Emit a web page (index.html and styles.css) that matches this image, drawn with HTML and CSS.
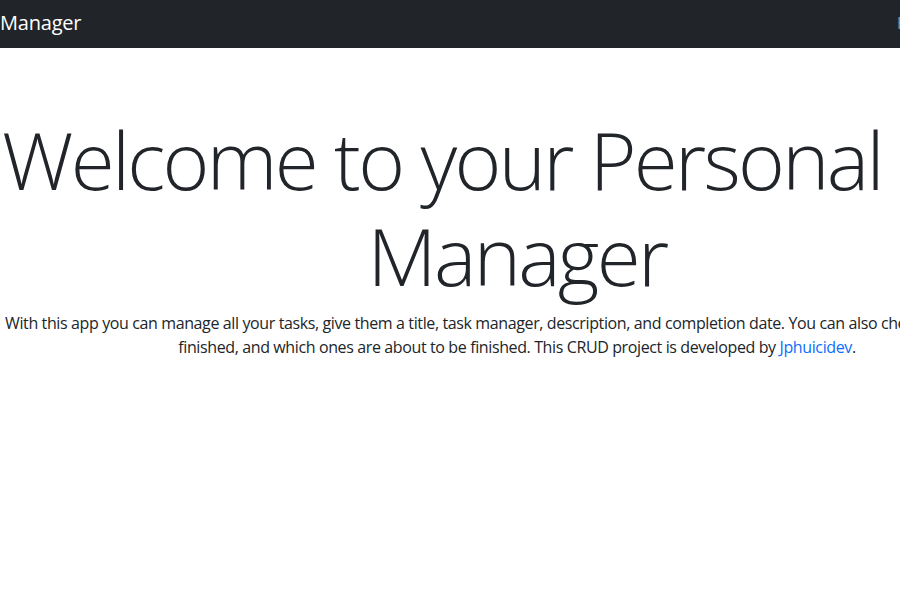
FILE: index.html
```html
<!DOCTYPE html>
<html lang="en">
<head>
<meta charset="utf-8">
<title>Task Manager</title>
<link rel="stylesheet" href="styles.css">
</head>
<body>
<nav class="navbar">
  <div class="nav-inner">
    <a class="brand" href="#">Manager</a>
    <a class="nav-link" href="#">Home</a>
  </div>
</nav>
<main class="hero">
  <h1 class="display">Welcome to your Personal Task<br>Manager</h1>
  <p class="lead-text">With this app you can manage all your tasks, give them a title, task manager, description, and completion date. You can also check which tasks have been<br>finished, and which ones are about to be finished. This CRUD project is developed by <a class="link" href="#">Jphuicidev</a>.</p>
</main>
</body>
</html>
```
FILE: styles.css
```css
html, body {
  margin: 0;
  padding: 0;
  overflow: hidden;
  background: #fff;
}
body {
  font-family: "Open Sans", "Noto Sans", sans-serif;
  color: #212529;
  font-size: 16px;
  line-height: 24px;
  width: 900px;
  height: 600px;
}
.navbar {
  background: #212529;
  height: 48px;
  overflow: hidden;
}
.nav-inner {
  display: flex;
  align-items: center;
  width: 1000px;
  height: 45px;
}
.brand {
  width: 897px;
  flex: none;
  font-size: 20px;
  color: #fff;
  text-decoration: none;
  line-height: 30px;
  letter-spacing: -0.2px;
}
.nav-link {
  color: rgba(255,255,255,.55);
  text-decoration: none;
  font-size: 16px;
}
.hero {
  width: 1034px;
  text-align: center;
  padding-top: 63px;
}
.display {
  font-size: 80px;
  font-weight: 300;
  line-height: 96px;
  letter-spacing: -2.7px;
  text-indent: 2px;
  margin: 0 0 8px;
  white-space: nowrap;
}
.lead-text {
  margin: 0;
  white-space: nowrap;
  letter-spacing: -0.38px;
  text-indent: 5px;
}
.link {
  color: #0d6efd;
  text-decoration: none;
}
```
